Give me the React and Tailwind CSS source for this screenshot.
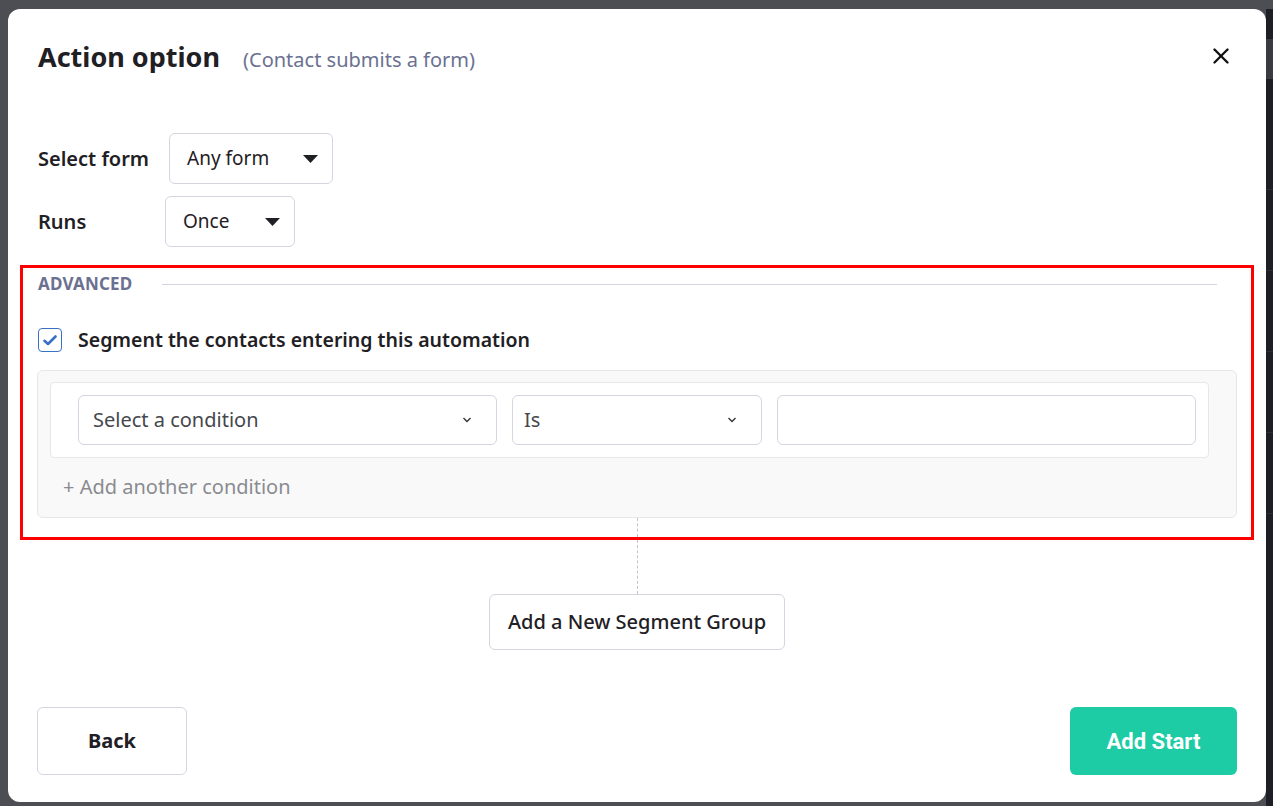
import { X } from 'lucide-react'

const font = { fontFamily: '"Noto Sans", "Open Sans", sans-serif' }

function Caret() {
  return (
    <svg width="15" height="8" viewBox="0 0 15 8" className="shrink-0">
      <path d="M0 0 L15 0 L7.5 8 Z" fill="#1f2024" />
    </svg>
  )
}

function Chevron() {
  return (
    <svg width="10" height="6" viewBox="0 0 10 6" className="shrink-0">
      <path d="M1.5 1 L5 4.5 L8.5 1" fill="none" stroke="#33353b" strokeWidth="1.4" />
    </svg>
  )
}

function FormSelect({ value, width }) {
  return (
    <div
      className={`h-[51px] ${width} flex items-center justify-between pl-[17px] pr-[14px] border border-[#d3d6e0] rounded-[6px] text-[19px] text-[#1f2024]`}
    >
      <span>{value}</span>
      <Caret />
    </div>
  )
}

export default function App() {
  return (
    <div className="w-[1273px] h-[806px] flex overflow-hidden bg-[#4d4e53]" style={font}>
      <div className="pl-[8px] pt-[9px]">
        <div className="w-[1258px] h-[793px] bg-white rounded-[12px] flex flex-col px-[29px] pb-[27px]">
          {/* header */}
          <div className="flex items-center justify-between pt-[30px]">
            <div className="flex items-baseline gap-[23px] pl-[1px]">
              <h1 className="text-[27px] leading-[36px] font-bold text-[#1f2024]">Action option</h1>
              <span className="text-[20px] text-[#6b7190]">(Contact submits a form)</span>
            </div>
            <button className="mr-[3px] -mt-[2px] text-[#111]">
              <X size={26} strokeWidth={2.2} />
            </button>
          </div>

          {/* form fields */}
          <div className="mt-[58px] flex flex-col gap-[12px]">
            <div className="flex items-center">
              <span className="w-[132px] pl-[1px] text-[20px] font-semibold text-[#1f2024]">Select form</span>
              <FormSelect value="Any form" width="w-[164px]" />
            </div>
            <div className="flex items-center">
              <span className="w-[128px] pl-[1px] text-[20px] font-semibold text-[#1f2024]">Runs</span>
              <FormSelect value="Once" width="w-[130px]" />
            </div>
          </div>

          {/* advanced (annotated) */}
          <div className="mt-[18px] -mx-[17px] border-[3px] border-[#ff0000] px-[14px] pt-[6px] flex flex-col">
            <div className="flex items-center gap-[30px] pr-[20px]">
              <span className="pl-[1px] text-[17px] leading-[20px] font-bold text-[#6b7190] tracking-[0.2px]">
                ADVANCED
              </span>
              <div className="flex-1 h-px bg-[#d3d6e0]" />
            </div>

            <label className="mt-[34px] h-[24px] flex items-center gap-[16px] pl-[1px]">
              <span className="w-[24px] h-[24px] border-[1.5px] border-[#3a6fc6] rounded-[4px] flex items-center justify-center">
                <svg width="14" height="11" viewBox="0 0 14 11">
                  <path d="M1.5 5.8 L5 9 L12.5 1.5" fill="none" stroke="#3a6fc6" strokeWidth="2.6" strokeLinecap="round" strokeLinejoin="round" />
                </svg>
              </span>
              <span className="text-[19.5px] leading-[24px] font-semibold text-[#1f2024]">
                Segment the contacts entering this automation
              </span>
            </label>

            <div className="mt-[18px] bg-[#f9f9f9] border border-[#e6e7eb] rounded-[6px] pt-[11px] pb-[16px]">
              <div className="ml-[12px] mr-[27px] bg-white border border-[#e6e7eb] rounded-[4px] pl-[27px] pr-[12px] py-[12px] flex gap-[15px]">
                <div className="w-[419px] h-[50px] border border-[#d3d6e0] rounded-[6px] flex items-center justify-between pl-[14px] pr-[24px] text-[20px] text-[#45474d]">
                  <span>Select a condition</span>
                  <Chevron />
                </div>
                <div className="w-[250px] h-[50px] border border-[#d3d6e0] rounded-[6px] flex items-center justify-between pl-[11px] pr-[24px] text-[20px] text-[#45474d]">
                  <span>Is</span>
                  <Chevron />
                </div>
                <div className="flex-1 h-[50px] border border-[#d3d6e0] rounded-[6px]" />
              </div>
              <div className="mt-[15px] pl-[25px] text-[20px] leading-[28px] text-[#8a8b90]">+ Add another condition</div>
            </div>

            <div className="h-[19px] flex justify-center">
              <div className="border-l border-dashed border-[#c4c4c8]" />
            </div>
          </div>

          <div className="h-[54px] flex justify-center">
            <div className="border-l border-dashed border-[#c4c4c8]" />
          </div>

          <div className="flex justify-center">
            <button className="w-[296px] h-[56px] border border-[#d3d6e0] rounded-[6px] text-[20px] font-medium text-[#1f2024]">
              Add a New Segment Group
            </button>
          </div>

          <div className="mt-[57px] flex justify-between">
            <button className="w-[150px] h-[68px] border border-[#d3d6e0] rounded-[6px] text-[20px] font-bold text-[#1f2024]">
              Back
            </button>
            <button
              className="w-[167px] h-[68px] bg-[#1dcca5] rounded-[6px] text-[22px] font-bold text-white"
              style={{ fontFamily: 'Roboto, "Noto Sans", sans-serif' }}
            >
              Add Start
            </button>
          </div>
        </div>
      </div>
      <div className="flex-1 mt-[9px] bg-[#1e1f26] flex flex-col">
        <div className="h-[40px] mt-[30px] bg-[#3a3b42]" />
        <div className="h-px mt-[110px] bg-[#2c2d35]" />
        <div className="h-px mt-[80px] bg-[#2c2d35]" />
        <div className="h-px mt-[80px] bg-[#2c2d35]" />
        <div className="h-px mt-[80px] bg-[#2c2d35]" />
        <div className="h-px mt-[80px] bg-[#2c2d35]" />
      </div>
    </div>
  )
}
